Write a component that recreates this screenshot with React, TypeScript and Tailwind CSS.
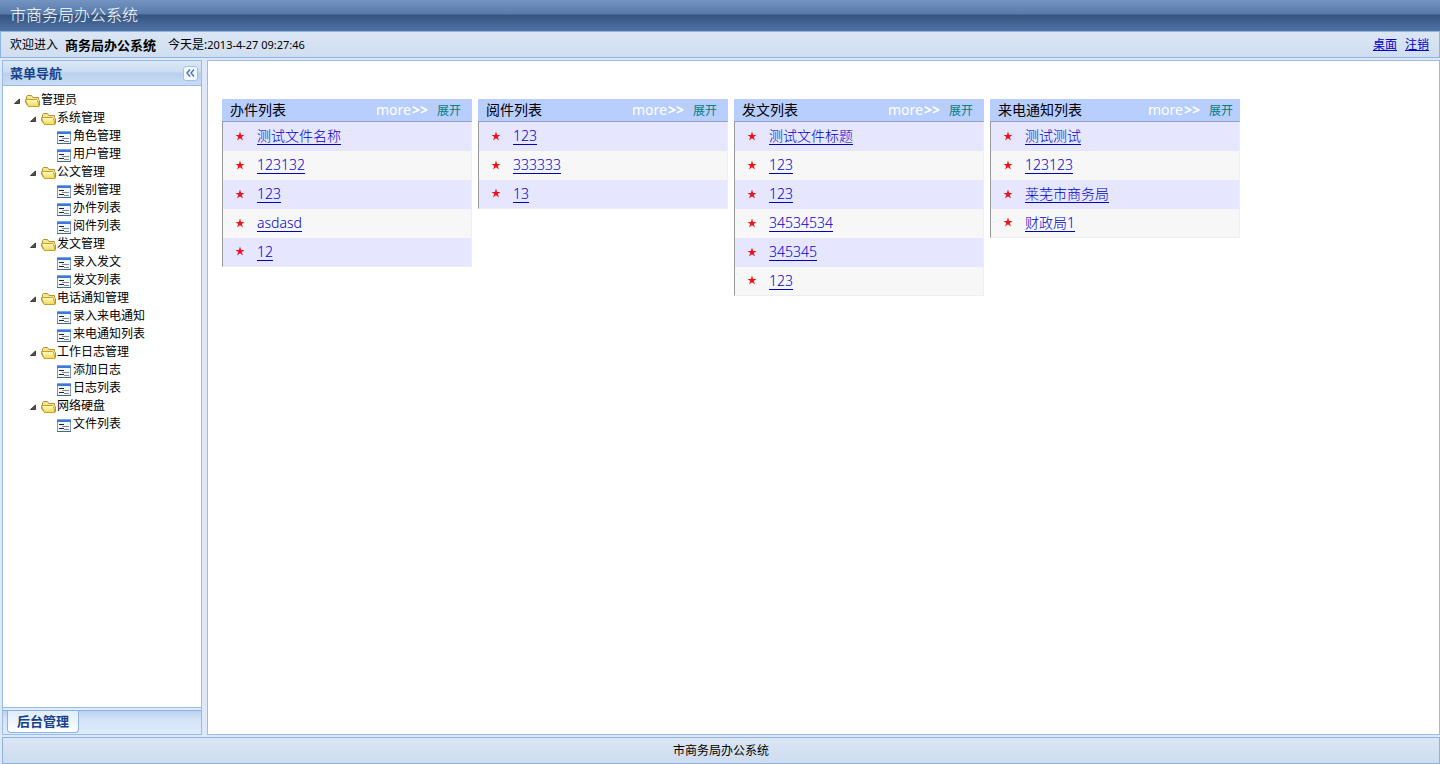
import { useState } from 'react'

interface MenuGroup {
  label: string
  items: string[]
}

interface ListPanel {
  title: string
  rows: string[]
  wide?: boolean
}

const MENU: MenuGroup[] = [
  { label: '系统管理', items: ['角色管理', '用户管理'] },
  { label: '公文管理', items: ['类别管理', '办件列表', '阅件列表'] },
  { label: '发文管理', items: ['录入发文', '发文列表'] },
  { label: '电话通知管理', items: ['录入来电通知', '来电通知列表'] },
  { label: '工作日志管理', items: ['添加日志', '日志列表'] },
  { label: '网络硬盘', items: ['文件列表'] }
]

const PANELS: ListPanel[] = [
  { title: '办件列表', rows: ['测试文件名称', '123132', '123', 'asdasd', '12'] },
  { title: '阅件列表', rows: ['123', '333333', '13'] },
  { title: '发文列表', rows: ['测试文件标题', '123', '123', '34534534', '345345', '123'] },
  { title: '来电通知列表', rows: ['测试测试', '123123', '莱芜市商务局', '财政局1'], wide: true }
]

function Arrow() {
  return (
    <svg width="16" height="18" viewBox="0 0 16 18" className="shrink-0">
      <path d="M10.5 8v4.5h-5z" fill="#555" stroke="#222" strokeWidth="0.8" />
    </svg>
  )
}

function FolderIcon() {
  return (
    <svg width="16" height="18" viewBox="0 0 16 18" className="shrink-0">
      <defs>
        <linearGradient id="folder" x1="0" y1="0" x2="0" y2="1">
          <stop offset="0" stopColor="#fffdd0" />
          <stop offset="1" stopColor="#f5d94f" />
        </linearGradient>
      </defs>
      <path
        d="M2.5 14.5L.5 11V8.5H1.5V5.5L2.5 4.5H6.5L8 6.5H13.5V8.5L14.5 9.5V14.5L13.5 15.5H3.5z"
        fill="#f6e58c"
        stroke="#b5912f"
      />
      <path d="M.5 8.5H11.5L12.5 9.5L14 15.5H3.5L2.5 14z" fill="url(#folder)" stroke="#c4a035" />
    </svg>
  )
}

function FormIcon() {
  return (
    <svg width="16" height="18" viewBox="0 0 16 18" className="shrink-0">
      <rect x="0.5" y="4.5" width="13" height="12" fill="#f1f6fc" stroke="#7c9cc0" />
      <path d="M0 16.5h14" stroke="#44678e" />
      <rect x="0" y="4" width="14" height="3" fill="#3f78dc" />
      <path d="M0 4.5h14" stroke="#79a5ef" />
      <path d="M2 9.5h5M2 13.5h5" stroke="#222" />
      <path d="M5 11.5h7M7 14.5h5" stroke="#888" />
    </svg>
  )
}

function Star() {
  return (
    <svg width="10" height="12" viewBox="0 0 10 12" className="shrink-0">
      <path d="M5 .5l1.1 3.4H9.5L6.7 5.9 8 9.5 5 7.2 2 9.5 3.3 5.9.5 3.9h3.4z" fill="#f01018" />
    </svg>
  )
}

function Panel({ title, rows, wide }: ListPanel) {
  const [open, setOpen] = useState(true)

  return (
    <section className="w-[250px]">
      <header
        className={`flex h-[23px] items-center border-b border-[#8f9fc4] bg-[#b8ceff] pl-2 ${wide ? 'pr-[7px]' : 'pr-[11px]'}`}
      >
        <h2 className="flex-1 text-sm leading-5 text-black">{title}</h2>
        <a href="#more" className="mr-[9px] text-sm leading-5 text-white">
          more<b className="ml-px">&gt;&gt;</b>
        </a>
        <button type="button" onClick={() => setOpen(!open)} className="pt-px text-xs leading-5 text-[#008080]">
          展开
        </button>
      </header>
      {open && (
        <ul className="border-r border-b border-l border-[#eeeeee] border-l-[#999999]">
          {rows.map((row, idx) => (
            <li
              key={idx}
              className="flex h-[29px] items-center pl-3 last:h-[28px] odd:bg-[#e6e6ff] even:bg-[#f7f7f7]"
            >
              <Star />
              <a
                href="#detail"
                className="ml-3 border-b border-[#0000bb] text-sm leading-4 font-light text-[#0000cc]"
              >
                {row}
              </a>
            </li>
          ))}
        </ul>
      )}
    </section>
  )
}

export default function App() {
  return (
    <div className="flex min-h-screen flex-col bg-[#dfe8f6] font-['Noto_Sans','Noto_Sans_CJK_SC',sans-serif] text-xs text-black">
      <header className="flex h-[31px] items-center bg-linear-[180deg,#7394c2_0px,#587aaa_14px,#35547f_15px,#4f72a5_31px] pb-px pl-[10px]">
        <h1 className="text-base leading-6 font-light text-white">市商务局办公系统</h1>
      </header>

      <div className="flex h-[27px] items-center justify-between border border-[#8db2e3] bg-linear-to-b from-[#dbe6f4] to-[#cfdef1] pr-[10px] pl-[9px]">
        <div className="flex items-center leading-4">
          <span>欢迎进入</span>
          <b className="ml-[7px] text-[13px]">商务局办公系统</b>
          <span className="ml-3">今天是:</span>
          <time className="text-[11px]">2013-4-27 09:27:46</time>
        </div>
        <nav className="flex gap-2 leading-4">
          <a href="#desktop" className="text-[#0000cc] underline">
            桌面
          </a>
          <a href="#logout" className="text-[#0000cc] underline">
            注销
          </a>
        </nav>
      </div>

      <div className="flex flex-1 gap-[5px] pt-[2px] pb-[2px] pl-[2px]">
        <aside className="flex w-[200px] flex-col border border-[#99bbe8]">
          <div className="flex h-[25px] items-center justify-between border-b border-[#99bbe8] bg-linear-[180deg,#dae7f6_0px,#cbdcf2_11px,#b9d0ee_12px,#c9dcf5_24px] pr-[3px] pl-[7px]">
            <h2 className="text-[13px] leading-4 font-bold text-[#15428b]">菜单导航</h2>
            <button
              type="button"
              aria-label="收起菜单"
              className="flex h-[15px] w-[15px] items-center justify-center rounded-[3px] border border-[#a3c1e8] bg-[#f3f8fe]"
            >
              <svg width="9" height="8" viewBox="0 0 9 8" fill="none" stroke="#4376b5" strokeWidth="1.4">
                <path d="M4 .5L1 4l3 3.5M8 .5L5 4l3 3.5" />
              </svg>
            </button>
          </div>

          <ul className="flex-1 bg-white pt-[5px] pl-[6px]">
            <li>
              <div className="flex h-[18px] items-center leading-4">
                <Arrow />
                <FolderIcon />
                <span>管理员</span>
              </div>
              <ul className="pl-4">
                {MENU.map((group) => (
                  <li key={group.label}>
                    <div className="flex h-[18px] items-center leading-4">
                      <Arrow />
                      <FolderIcon />
                      <span>{group.label}</span>
                    </div>
                    <ul className="pl-8">
                      {group.items.map((item) => (
                        <li key={item}>
                          <a href="#page" className="flex h-[18px] items-center leading-4">
                            <FormIcon />
                            {item}
                          </a>
                        </li>
                      ))}
                    </ul>
                  </li>
                ))}
              </ul>
            </li>
          </ul>

          <div className="h-[3px] border-t border-[#99bbe8] bg-[#deecfd]" />
          <div className="h-[24px] border-t border-[#8db2e3] bg-linear-[180deg,#b9d0ee_0px,#d3e4f8_8px,#deecfb_23px] pl-1">
            <button
              type="button"
              className="h-[22px] w-[72px] rounded-b-[4px] border border-t-0 border-[#8db2e3] bg-linear-to-b from-[#deecfd] to-white pb-[2px] text-[13px] leading-4 font-bold text-[#15428b]"
            >
              后台管理
            </button>
          </div>
        </aside>

        <main className="flex flex-1 flex-wrap items-start gap-[6px] border border-[#99bbe8] bg-white pt-[38px] pl-[14px]">
          {PANELS.map((panel) => (
            <Panel key={panel.title} {...panel} />
          ))}
        </main>
      </div>

      <footer className="ml-[2px] flex h-[27px] items-center justify-center border border-[#8db2e3] bg-linear-to-b from-[#dbe6f4] to-[#cddcf0] leading-4">
        市商务局办公系统
      </footer>
    </div>
  )
}
